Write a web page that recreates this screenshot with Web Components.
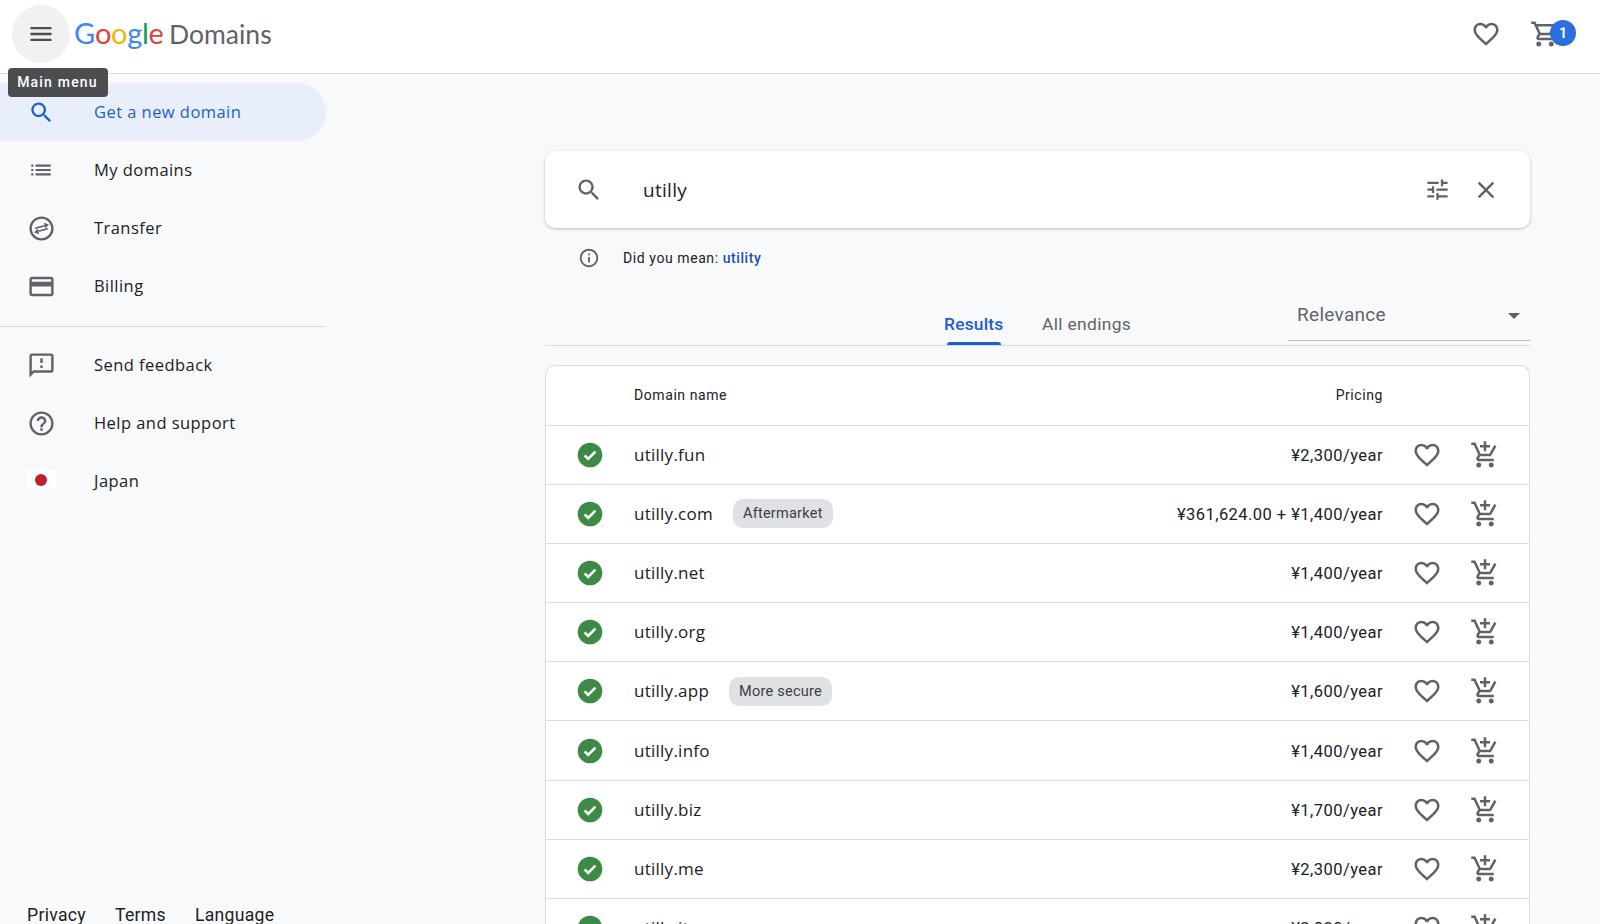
<!DOCTYPE html>
<html><head><meta charset="utf-8">
<style>
html,body{margin:0;padding:0;height:924px;overflow:hidden;background:#f8f9fa;}
body{font-family:"Roboto","Liberation Sans",sans-serif;color:#202124;}
</style></head>
<body>
<gd-app></gd-app>
<script>
const P={
menu:'M3 18h18v-2H3v2zm0-5h18v-2H3v2zm0-7v2h18V6H3z',
search:'M15.5 14h-.79l-.28-.27C15.41 12.59 16 11.11 16 9.5 16 5.91 13.09 3 9.5 3S3 5.91 3 9.5 5.91 16 9.5 16c1.61 0 3.09-.59 4.23-1.57l.27.28v.79l5 4.99L20.49 19l-4.99-5zm-6 0C7.01 14 5 11.99 5 9.5S7.01 5 9.5 5 14 7.01 14 9.5 11.99 14 9.5 14z',
list:'M3 13h2v-2H3v2zm0 4h2v-2H3v2zm0-8h2V7H3v2zm4 4h14v-2H7v2zm0 4h14v-2H7v2zM7 7v2h14V7H7z',
ring:'M12 2C6.48 2 2 6.48 2 12s4.48 10 10 10 10-4.48 10-10S17.52 2 12 2zm0 18c-4.41 0-8-3.59-8-8s3.59-8 8-8 8 3.59 8 8-3.59 8-8 8z',
card:'M20 4H4c-1.11 0-1.99.89-1.99 2L2 18c0 1.11.89 2 2 2h16c1.11 0 2-.89 2-2V6c0-1.11-.89-2-2-2zm0 14H4v-6h16v6zm0-10H4V6h16v2z',
feedback:'M20 2H4c-1.1 0-1.99.9-1.99 2L2 22l4-4h14c1.1 0 2-.9 2-2V4c0-1.1-.9-2-2-2zm0 14H5.17L4 17.17V4h16v12zM11 12h2v2h-2zm0-6h2v4h-2z',
help:'M11 18h2v-2h-2v2zm1-16C6.48 2 2 6.48 2 12s4.48 10 10 10 10-4.48 10-10S17.52 2 12 2zm0 18c-4.41 0-8-3.59-8-8s3.59-8 8-8 8 3.59 8 8-3.59 8-8 8zm0-14c-2.21 0-4 1.79-4 4h2c0-1.1.9-2 2-2s2 .9 2 2c0 2-3 1.75-3 5h2c0-2.25 3-2.5 3-5 0-2.21-1.79-4-4-4z',
heart:'M16.5 3c-1.74 0-3.41.81-4.5 2.09C10.91 3.81 9.24 3 7.5 3 4.42 3 2 5.42 2 8.5c0 3.78 3.4 6.86 8.55 11.54L12 21.35l1.45-1.32C18.6 15.36 22 12.28 22 8.5 22 5.42 19.58 3 16.5 3zm-4.4 15.55l-.1.1-.1-.1C7.14 14.24 4 11.39 4 8.5 4 6.5 5.5 5 7.5 5c1.54 0 3.04.99 3.57 2.36h1.87C13.46 5.99 14.96 5 16.5 5c2 0 3.5 1.5 3.5 3.5 0 2.89-3.14 5.74-7.9 10.05z',
cart:'M15.55 13c.75 0 1.41-.41 1.75-1.03l3.58-6.49c.37-.66-.11-1.48-.87-1.48H5.21l-.94-2H1v2h2l3.6 7.59-1.35 2.44C4.52 15.37 5.48 17 7 17h12v-2H7l1.1-2h7.45zM6.16 6h12.15l-2.76 5H8.53L6.16 6zM7 18c-1.1 0-1.99.9-1.99 2S5.9 22 7 22s2-.9 2-2-.9-2-2-2zm10 0c-1.1 0-1.99.9-1.99 2s.89 2 1.99 2 2-.9 2-2-.9-2-2-2z',
addcart:'M11 9h2V6h3V4h-3V1h-2v3H8v2h3v3zm-4 9c-1.1 0-1.99.9-1.99 2S5.9 22 7 22s2-.9 2-2-.9-2-2-2zm10 0c-1.1 0-1.99.9-1.99 2s.89 2 1.99 2 2-.9 2-2-.9-2-2-2zm-9.83-3.25l.03-.12.9-1.63h7.45c.75 0 1.41-.41 1.75-1.03l3.86-7.01L19.42 4h-.01l-1.1 2-2.76 5H8.53l-.13-.27L6.16 6l-.95-2-.94-2H1v2h2l3.6 7.59-1.35 2.45c-.16.28-.25.61-.25.96 0 1.1.9 2 2 2h12v-2H7.42c-.13 0-.25-.11-.25-.25z',
tune:'M3 17v2h6v-2H3zM3 5v2h10V5H3zm10 16v-2h8v-2h-8v-2h-2v6h2zM7 9v2H3v2h4v2h2V9H7zm14 4v-2H11v2h10zm-6-4h2V7h4V5h-4V3h-2v6z',
close:'M19 6.41L17.59 5 12 10.59 6.41 5 5 6.41 10.59 12 5 17.59 6.41 19 12 13.41 17.59 19 19 17.59 13.41 12z',
info:'M11 7h2v2h-2zm0 4h2v6h-2zm1-9C6.48 2 2 6.48 2 12s4.48 10 10 10 10-4.48 10-10S17.52 2 12 2zm0 18c-4.41 0-8-3.59-8-8s3.59-8 8-8 8 3.59 8 8-3.59 8-8 8z'
};
const GS='"Open Sans","Roboto",sans-serif';
function def(name,render){
  customElements.define(name,class extends HTMLElement{
    connectedCallback(){
      if(this.shadowRoot)return;
      const s=this.attachShadow({mode:'open'});
      s.innerHTML=render(this);
    }
  });
}
def('gd-icon',e=>{
  const n=e.getAttribute('name'),sz=e.getAttribute('size')||26,c=e.getAttribute('color')||'#5f6368';
  const inner=n==='transfer'
    ?`<path fill="${c}" d="${P.ring}"/><path fill="none" stroke="${c}" stroke-width="1.4" d="M6.8 11.8L14.4 9.7M17.2 12.2L9.6 14.3"/><path fill="${c}" d="M13.9 7.2L18.2 8.6 15.1 11.9zM10.1 16.8L5.8 15.4 8.9 12.1z"/>`
    :`<path fill="${c}" d="${P[n]}"/>`;
  return `<style>:host{display:inline-flex;flex:none;width:${sz}px;height:${sz}px}svg{display:block;width:100%;height:100%}</style>
  <svg viewBox="0 0 24 24">${inner}</svg>`;
});
def('gd-check',()=>`<style>:host{display:inline-flex;flex:none;width:28px;height:28px}svg{display:block;width:100%;height:100%}</style>
  <svg viewBox="0 0 28 28"><circle cx="14" cy="14" r="12.3" fill="#3c8a45"/><path d="M8.6 14.4l3.6 3.6 7.2-7.4" fill="none" stroke="#fff" stroke-width="2.6"/></svg>`);
def('gd-header',()=>`<style>
  :host{display:flex;align-items:center;height:73px;background:#fff;border-bottom:1px solid #dadce0;flex:none;position:relative;z-index:2;padding:0 16px 0 12px;box-sizing:content-box}
  .btn{width:58px;height:58px;border-radius:50%;background:#f1f1f1;display:flex;align-items:center;justify-content:center;margin-right:4px;margin-top:-5px}
  .logo{display:flex;align-items:baseline;font-family:"Lato","Roboto",sans-serif;font-size:29px;line-height:36px;margin-top:-6px;letter-spacing:-.3px}
  .g1{color:#4285f4}.r{color:#db4437}.y{color:#f4b400}.gr{color:#0f9d58}
  .dom{color:#5f6368;margin-left:5.5px;font-size:26.5px;letter-spacing:0}
  .right{margin-left:auto;display:flex;align-items:center;margin-top:-5px}
  .cart{position:relative;margin-left:29px;margin-right:24px;display:flex}
  .badge{position:absolute;left:20px;top:1px;width:26px;height:26px;border-radius:50%;background:#2a6fdd;color:#fff;font:700 14px/26px Roboto,sans-serif;text-align:center}
  .tip{position:absolute;left:7.5px;top:68px;width:100px;height:29px;background:#4b4d50;border-radius:4px;color:#fff;font:500 14px/29px Roboto,sans-serif;letter-spacing:1.2px;text-align:center}
  </style>
  <div class="btn"><gd-icon name="menu" size="28" color="#4a4d51"></gd-icon></div>
  <div class="logo"><span class="g1">G</span><span class="r">o</span><span class="y">o</span><span class="g1">g</span><span class="gr">l</span><span class="r">e</span><span class="dom">Domains</span></div>
  <div class="right"><gd-icon name="heart" size="30"></gd-icon><div class="cart"><gd-icon name="cart" size="30"></gd-icon><span class="badge">1</span></div></div>
  <div class="tip">Main menu</div>`);
def('gd-nav-item',e=>{
  const a=e.hasAttribute('active');
  return `<style>
  :host{display:flex;align-items:center;height:58px;width:326px;box-sizing:border-box;padding-left:28px;flex:none;border-radius:0 29px 29px 0;${a?'background:#e8eefa;':''}}
  .t{margin-left:40px;font:500 16.5px/24px ${GS};letter-spacing:.45px;color:${a?'#1a5fd0':'#202124'}}
  .w{width:26px;height:26px;display:flex;justify-content:center;align-items:center}
  </style><div class="w"><slot name="icon"></slot></div><span class="t"><slot></slot></span>`;
});
def('gd-flag',()=>`<style>:host{display:flex;align-items:center;justify-content:center;flex:none;width:29px;height:19px;background:#fff;margin-top:-3px}i{display:block;width:12px;height:12px;border-radius:50%;background:#bc2030}</style><i></i>`);
def('gd-sidebar',()=>`<style>
  :host{display:flex;flex-direction:column;width:326px;flex:none;padding-top:9px;box-sizing:border-box;height:850px}
  hr{border:0;border-top:1px solid #dadce0;margin:10.5px 0 9.5px;width:326px;flex:none}
  .foot{margin-top:auto;display:flex;gap:29px;padding:0 0 0 27px;font:400 17.6px/18px Roboto,sans-serif;letter-spacing:.3px;color:#202124}
  </style>
  <slot name="top"></slot><hr><slot name="bottom"></slot>
  <div class="foot"><span>Privacy</span><span>Terms</span><span>Language</span></div>`);
def('gd-search',()=>`<style>
  :host{display:flex;flex:none;align-items:center;height:77px;background:#fff;border-radius:10px;box-shadow:0 1px 3px rgba(60,64,67,.35);padding:0 30px 0 30px;box-sizing:border-box}
  .q{margin-left:40px;font:500 19px/26px ${GS};letter-spacing:.3px;color:#202124;flex:1}
  .sp{margin-right:21px}
  </style>
  <gd-icon name="search" size="28"></gd-icon><span class="q">utilly</span>
  <gd-icon class="sp" name="tune" size="27"></gd-icon><gd-icon name="close" size="28"></gd-icon>`);
def('gd-suggest',()=>`<style>
  :host{display:flex;flex:none;align-items:center;height:22px;margin-top:18.5px;padding-left:33px;font:400 14px/20px Roboto,sans-serif;letter-spacing:.58px;color:#202124}
  span{margin-left:23px}a{color:#1a4fb5;text-decoration:none;font-weight:500}
  </style><gd-icon name="info" size="22"></gd-icon><span>Did you mean: <a>utility</a></span>`);
def('gd-tabs',()=>`<style>
  :host{display:flex;flex:none;position:relative;height:58px;border-bottom:1px solid #dadce0;margin-top:18px;box-sizing:content-box}
  .t{position:absolute;top:25px;font:400 17.4px/24px Roboto,sans-serif;letter-spacing:.35px;color:#5f6368}
  .a{color:#1a5fd0;left:399px;font-weight:500;letter-spacing:.2px}
  .b{left:497px}
  .u{position:absolute;left:402px;bottom:0;width:54px;height:3px;border-radius:3px 3px 0 0;background:#1a5fd0}
  .sel{position:absolute;left:743px;right:0;top:0;height:54px;border-bottom:1px solid #bdc1c6;font:400 19px/56px Roboto,sans-serif;letter-spacing:.3px;color:#5f6368;padding-left:9px;box-sizing:border-box}
  .ar{position:absolute;right:10px;top:26px;width:0;height:0;border:6px solid transparent;border-top:6px solid #5f6368;border-bottom:0}
  </style><span class="t a">Results</span><span class="u"></span><span class="t b">All endings</span>
  <div class="sel">Relevance<i class="ar"></i></div>`);
def('gd-row',e=>{
  const name=e.getAttribute('name'),[a,b]=name.split('.'),tag=e.getAttribute('tag'),price=e.getAttribute('price');
  return `<style>
  :host{display:flex;align-items:center;height:59.2px;box-sizing:border-box;border-top:1px solid #dadce0;padding-left:30px;flex:none}
  .n{margin-left:30px;font:500 17px/24px ${GS};letter-spacing:.25px;color:#202124}
  .n b{font-weight:500}.n s{text-decoration:none;font-weight:400}
  .tag{margin-left:20px;height:29px;padding:0 10px;border-radius:10px;background:#dfe1e5;font:400 14.5px/30px Roboto,sans-serif;letter-spacing:.24px;color:#3c4043}
  .p{margin-left:auto;padding-top:2px;font:400 16.5px/24px Roboto,sans-serif;letter-spacing:.45px;color:#202124}
  .h{margin-left:29px}.c{margin-left:28px;margin-right:29px}
  </style><gd-check></gd-check><span class="n"><b>${a}</b><s>.${b}</s></span>${tag?`<span class="tag">${tag}</span>`:''}
  <span class="p">${price}</span><gd-icon class="h" name="heart" size="30"></gd-icon><gd-icon class="c" name="addcart" size="30"></gd-icon>`;
});
def('gd-table',()=>`<style>
  :host{display:block;flex:none;margin-top:19px;background:#fff;border:1px solid #dadce0;border-bottom:0;border-radius:10px 10px 0 0;width:985px;box-sizing:border-box}
  .h{display:flex;align-items:center;height:59px;padding:0 146px 0 88px;font:400 14px/20px Roboto,sans-serif;letter-spacing:.58px;color:#202124;justify-content:space-between}
  </style><div class="h"><span>Domain name</span><span>Pricing</span></div><slot></slot>`);
def('gd-app',()=>`<style>
  :host{display:flex;flex-direction:column;height:924px;overflow:hidden}
  .body{display:flex;flex:1;min-height:0}
  .main{margin-left:219px;width:985px;padding-top:77px;flex:none;display:flex;flex-direction:column;min-height:0}
  </style>
  <gd-header></gd-header>
  <div class="body">
   <gd-sidebar>
    <div slot="top" style="display:contents">
    <gd-nav-item active><gd-icon slot="icon" name="search" size="27" color="#1a5fd0"></gd-icon>Get a new domain</gd-nav-item>
    <gd-nav-item><gd-icon slot="icon" name="list" size="26"></gd-icon>My domains</gd-nav-item>
    <gd-nav-item><gd-icon slot="icon" name="transfer" size="29"></gd-icon>Transfer</gd-nav-item>
    <gd-nav-item><gd-icon slot="icon" name="card" size="29"></gd-icon>Billing</gd-nav-item>
    </div>
    <div slot="bottom" style="display:contents">
    <gd-nav-item><gd-icon slot="icon" name="feedback" size="29"></gd-icon>Send feedback</gd-nav-item>
    <gd-nav-item><gd-icon slot="icon" name="help" size="29"></gd-icon>Help and support</gd-nav-item>
    <gd-nav-item><gd-flag slot="icon"></gd-flag>Japan</gd-nav-item>
    </div>
   </gd-sidebar>
   <div class="main">
    <gd-search></gd-search>
    <gd-suggest></gd-suggest>
    <gd-tabs></gd-tabs>
    <gd-table>
     <gd-row name="utilly.fun" price="¥2,300/year"></gd-row>
     <gd-row name="utilly.com" tag="Aftermarket" price="¥361,624.00 + ¥1,400/year"></gd-row>
     <gd-row name="utilly.net" price="¥1,400/year"></gd-row>
     <gd-row name="utilly.org" price="¥1,400/year"></gd-row>
     <gd-row name="utilly.app" tag="More secure" price="¥1,600/year"></gd-row>
     <gd-row name="utilly.info" price="¥1,400/year"></gd-row>
     <gd-row name="utilly.biz" price="¥1,700/year"></gd-row>
     <gd-row name="utilly.me" price="¥2,300/year"></gd-row>
     <gd-row name="utilly.it" price="¥2,800/year"></gd-row>
    </gd-table>
   </div>
  </div>`);
</script>
</body></html>
